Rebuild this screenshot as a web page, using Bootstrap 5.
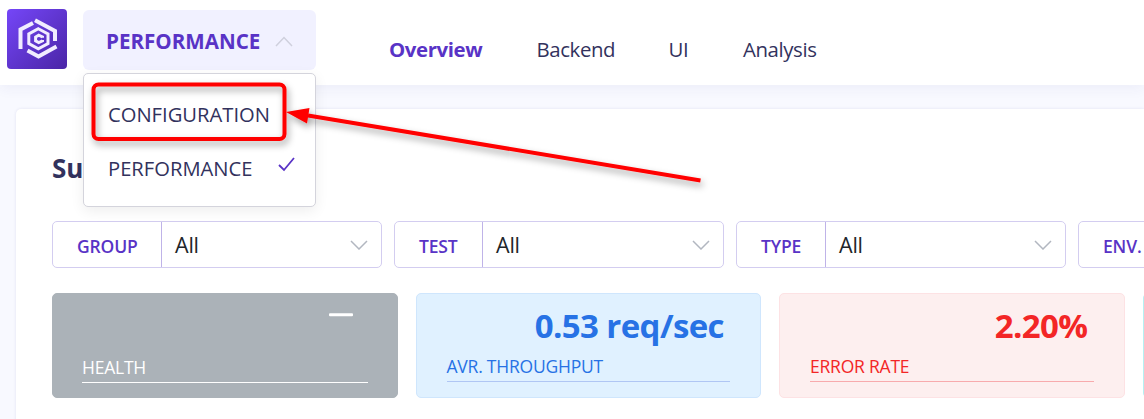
<!DOCTYPE html>
<html lang="en">
<head>
<meta charset="utf-8">
<title>Performance overview</title>
<link href="https://cdn.jsdelivr.net/npm/bootstrap@5.3.0/dist/css/bootstrap.min.css" rel="stylesheet">
<style>
body{font-family:"Open Sans","Noto Sans",sans-serif;background:#f8f9ff;color:#32325d;height:419px;overflow:hidden;position:relative}
.topbar{height:85px;background:#fff;box-shadow:0 4px 12px rgba(50,50,150,.055);padding:9px 0 0 7px;position:relative;z-index:2}
.logo{width:60px;height:60px}
.picker{width:233px;height:60px;margin:1px 0 0 16px;background:#f1f1ff;border-radius:6px;position:relative}
.picker-btn{height:60px;padding:3px 23px 0 23px;color:#5933c6;font-weight:700;font-size:20.6px}
.picker-menu{position:absolute;top:63px;left:0;width:233px;height:134px;background:#fff;border:1px solid #d4d4dc;border-radius:5px;box-shadow:0 4px 14px rgba(0,0,0,.07);padding:13px 20px 0 24px}
.picker-item{height:54px;font-size:20.2px}
.tabs{margin-left:73px;padding-top:3px;height:80px;font-size:20.4px}
.tabs a{color:#32325d;text-decoration:none;line-height:74px;height:74px;display:block;letter-spacing:-.4px}
.tabs a.on{font-weight:700;color:#5933c6;letter-spacing:-.4px}
.tabs a:nth-child(1){width:147.5px}.tabs a:nth-child(2){width:132px}.tabs a:nth-child(3){width:74.5px}
.panel{margin:24px 0 0 16px;height:330px;background:#fff;border-radius:5px 0 0 0;box-shadow:0 0 3px rgba(50,50,150,.12);padding:39px 0 0 36px;overflow:hidden}
.panel h1{font-size:26px;font-weight:700;line-height:40px;height:73px;margin:0}
.filters{gap:12px}
.filter{width:330px;height:47px;flex:none;border:1px solid #d3cdf0;border-radius:5px}
.filter-name{color:#5933c6;font-weight:600;font-size:17.5px;letter-spacing:-.15px;padding:3px 0 0 24px;border-right:1px solid #bfb3e8;line-height:42px}
.filter-value{font-size:21.5px;color:#212529;padding:0 13px;line-height:45px}
.filter-value span{letter-spacing:-.2px}
.metrics{gap:18px;margin-top:25px}
.metric{width:345.5px;height:105px;flex:none;border:1px solid;border-radius:5px;padding:9px 30px 0 30px}
.metric-value{font-size:33px;font-weight:700;line-height:46px;height:46px;padding-right:6px;letter-spacing:-.6px}
.metric-name{font-size:17.5px;line-height:34px;height:33px;border-bottom:1px solid;letter-spacing:-.22px}
.gray{background:#abb2b8;border-color:#abb2b8;color:#fff;padding-left:29px;padding-right:29px}
.gray .metric-value{height:47px;padding:9px 15px 0 0;line-height:0}
.blue{background:#e0f1ff;border-color:#cfe6fd;color:#2772e5}
.red{background:#fdefef;border-color:#fde2e4;color:#f32626}
.blue .metric-name{border-bottom-color:#b0c6f4}
.red .metric-name{border-bottom-color:#f8abad}
.gray .metric-name{border-bottom-color:#fff}
.cyan{background:#e0ffff;border-color:#b5f1f3}
.marker{position:absolute;left:0;top:0;z-index:5;pointer-events:none}
</style>
</head>
<body>
<header class="topbar d-flex">
  <svg class="logo" viewBox="0 0 60 60"><defs><linearGradient id="lg" x1="0" y1="0" x2="1" y2="1"><stop offset="0" stop-color="#7546f8"/><stop offset="1" stop-color="#4a25a6"/></linearGradient></defs>
    <rect width="60" height="60" rx="4" fill="url(#lg)"/>
    <g fill="none" stroke="#f1ecff" stroke-width="4">
      <path d="M13.500 40V20.500L26 14"/><path d="M28 11.200L48 22V32"/><path d="M20.500 41.500L31.500 47.500L49.500 37.500"/>
      <path d="M31.300 19.800L41 25V34.500L31.300 39.800L21.800 34.500V25Z" stroke-width="3"/>
      <path d="M35.500 28.700V27.900L31.700 26.200L28.600 28V31.800L31.700 33.500L35.500 31.800V31" stroke-width="3"/>
    </g></svg>
  <div class="picker">
    <div class="picker-btn d-flex align-items-center justify-content-between"><span>PERFORMANCE</span>
      <svg width="18" height="11" viewBox="0 0 18 11"><path d="M1 10L9 1.500L17 10" fill="none" stroke="#cfd0dd" stroke-width="1.500"/></svg></div>
    <div class="picker-menu">
      <div class="picker-item d-flex align-items-center"><span>CONFIGURATION</span></div>
      <div class="picker-item d-flex align-items-center justify-content-between"><span>PERFORMANCE</span>
        <svg class="mb-2" width="17" height="15" viewBox="0 0 17 15"><path d="M1 8L6 13L16 1" fill="none" stroke="#5933c6" stroke-width="1.800"/></svg></div>
    </div>
  </div>
  <nav class="tabs d-flex"><a class="on" href="#">Overview</a><a href="#">Backend</a><a href="#">UI</a><a href="#">Analysis</a></nav>
</header>
<main class="panel">
  <h1>Su</h1>
  <div class="filters d-flex">
    <div class="filter d-flex"><div class="filter-name" style="width:109px"><span>GROUP</span></div><div class="filter-value d-flex flex-fill justify-content-between align-items-center"><span>All</span><svg width="18" height="10" viewBox="0 0 18 10"><path d="M1 1L9 9L17 1" fill="none" stroke="#b2b7c0" stroke-width="1.500"/></svg></div></div>
    <div class="filter d-flex"><div class="filter-name" style="width:88px"><span>TEST</span></div><div class="filter-value d-flex flex-fill justify-content-between align-items-center"><span>All</span><svg width="18" height="10" viewBox="0 0 18 10"><path d="M1 1L9 9L17 1" fill="none" stroke="#b2b7c0" stroke-width="1.500"/></svg></div></div>
    <div class="filter d-flex"><div class="filter-name" style="width:89px"><span>TYPE</span></div><div class="filter-value d-flex flex-fill justify-content-between align-items-center"><span>All</span><svg width="18" height="10" viewBox="0 0 18 10"><path d="M1 1L9 9L17 1" fill="none" stroke="#b2b7c0" stroke-width="1.500"/></svg></div></div>
    <div class="filter d-flex"><div class="filter-name" style="width:88px"><span>ENV.</span></div></div>
  </div>
  <div class="metrics d-flex">
    <div class="metric gray"><div class="metric-value text-end"><svg width="24" height="4"><rect width="24" height="3" y=".3" rx="1" fill="#fff"/></svg></div><div class="metric-name"><span>HEALTH</span></div></div>
    <div class="metric blue"><div class="metric-value text-end"><span>0.53 req/sec</span></div><div class="metric-name"><span>AVR. THROUGHPUT</span></div></div>
    <div class="metric red"><div class="metric-value text-end"><span>2.20%</span></div><div class="metric-name"><span>ERROR RATE</span></div></div>
    <div class="metric cyan"></div>
  </div>
</main>
<svg class="marker" width="1144" height="419" viewBox="0 0 1144 419"><defs><filter id="sh" x="-10%" y="-20%" width="120%" height="150%"><feDropShadow dx="2" dy="4" stdDeviation="3.500" flood-color="#000" flood-opacity=".36"/></filter></defs>
  <g filter="url(#sh)"><rect x="93.500" y="84.500" width="191" height="54.500" rx="5" fill="none" stroke="#f00" stroke-width="4"/></g>
  <g filter="url(#sh)"><path d="M308 115.500L700.500 180.500" stroke="#f00" stroke-width="4"/><path d="M286 112L309.500 108L307 123.500Z" fill="#f00"/></g></svg>
<script src="https://cdn.jsdelivr.net/npm/bootstrap@5.3.0/dist/js/bootstrap.bundle.min.js"></script>
</body>
</html>
